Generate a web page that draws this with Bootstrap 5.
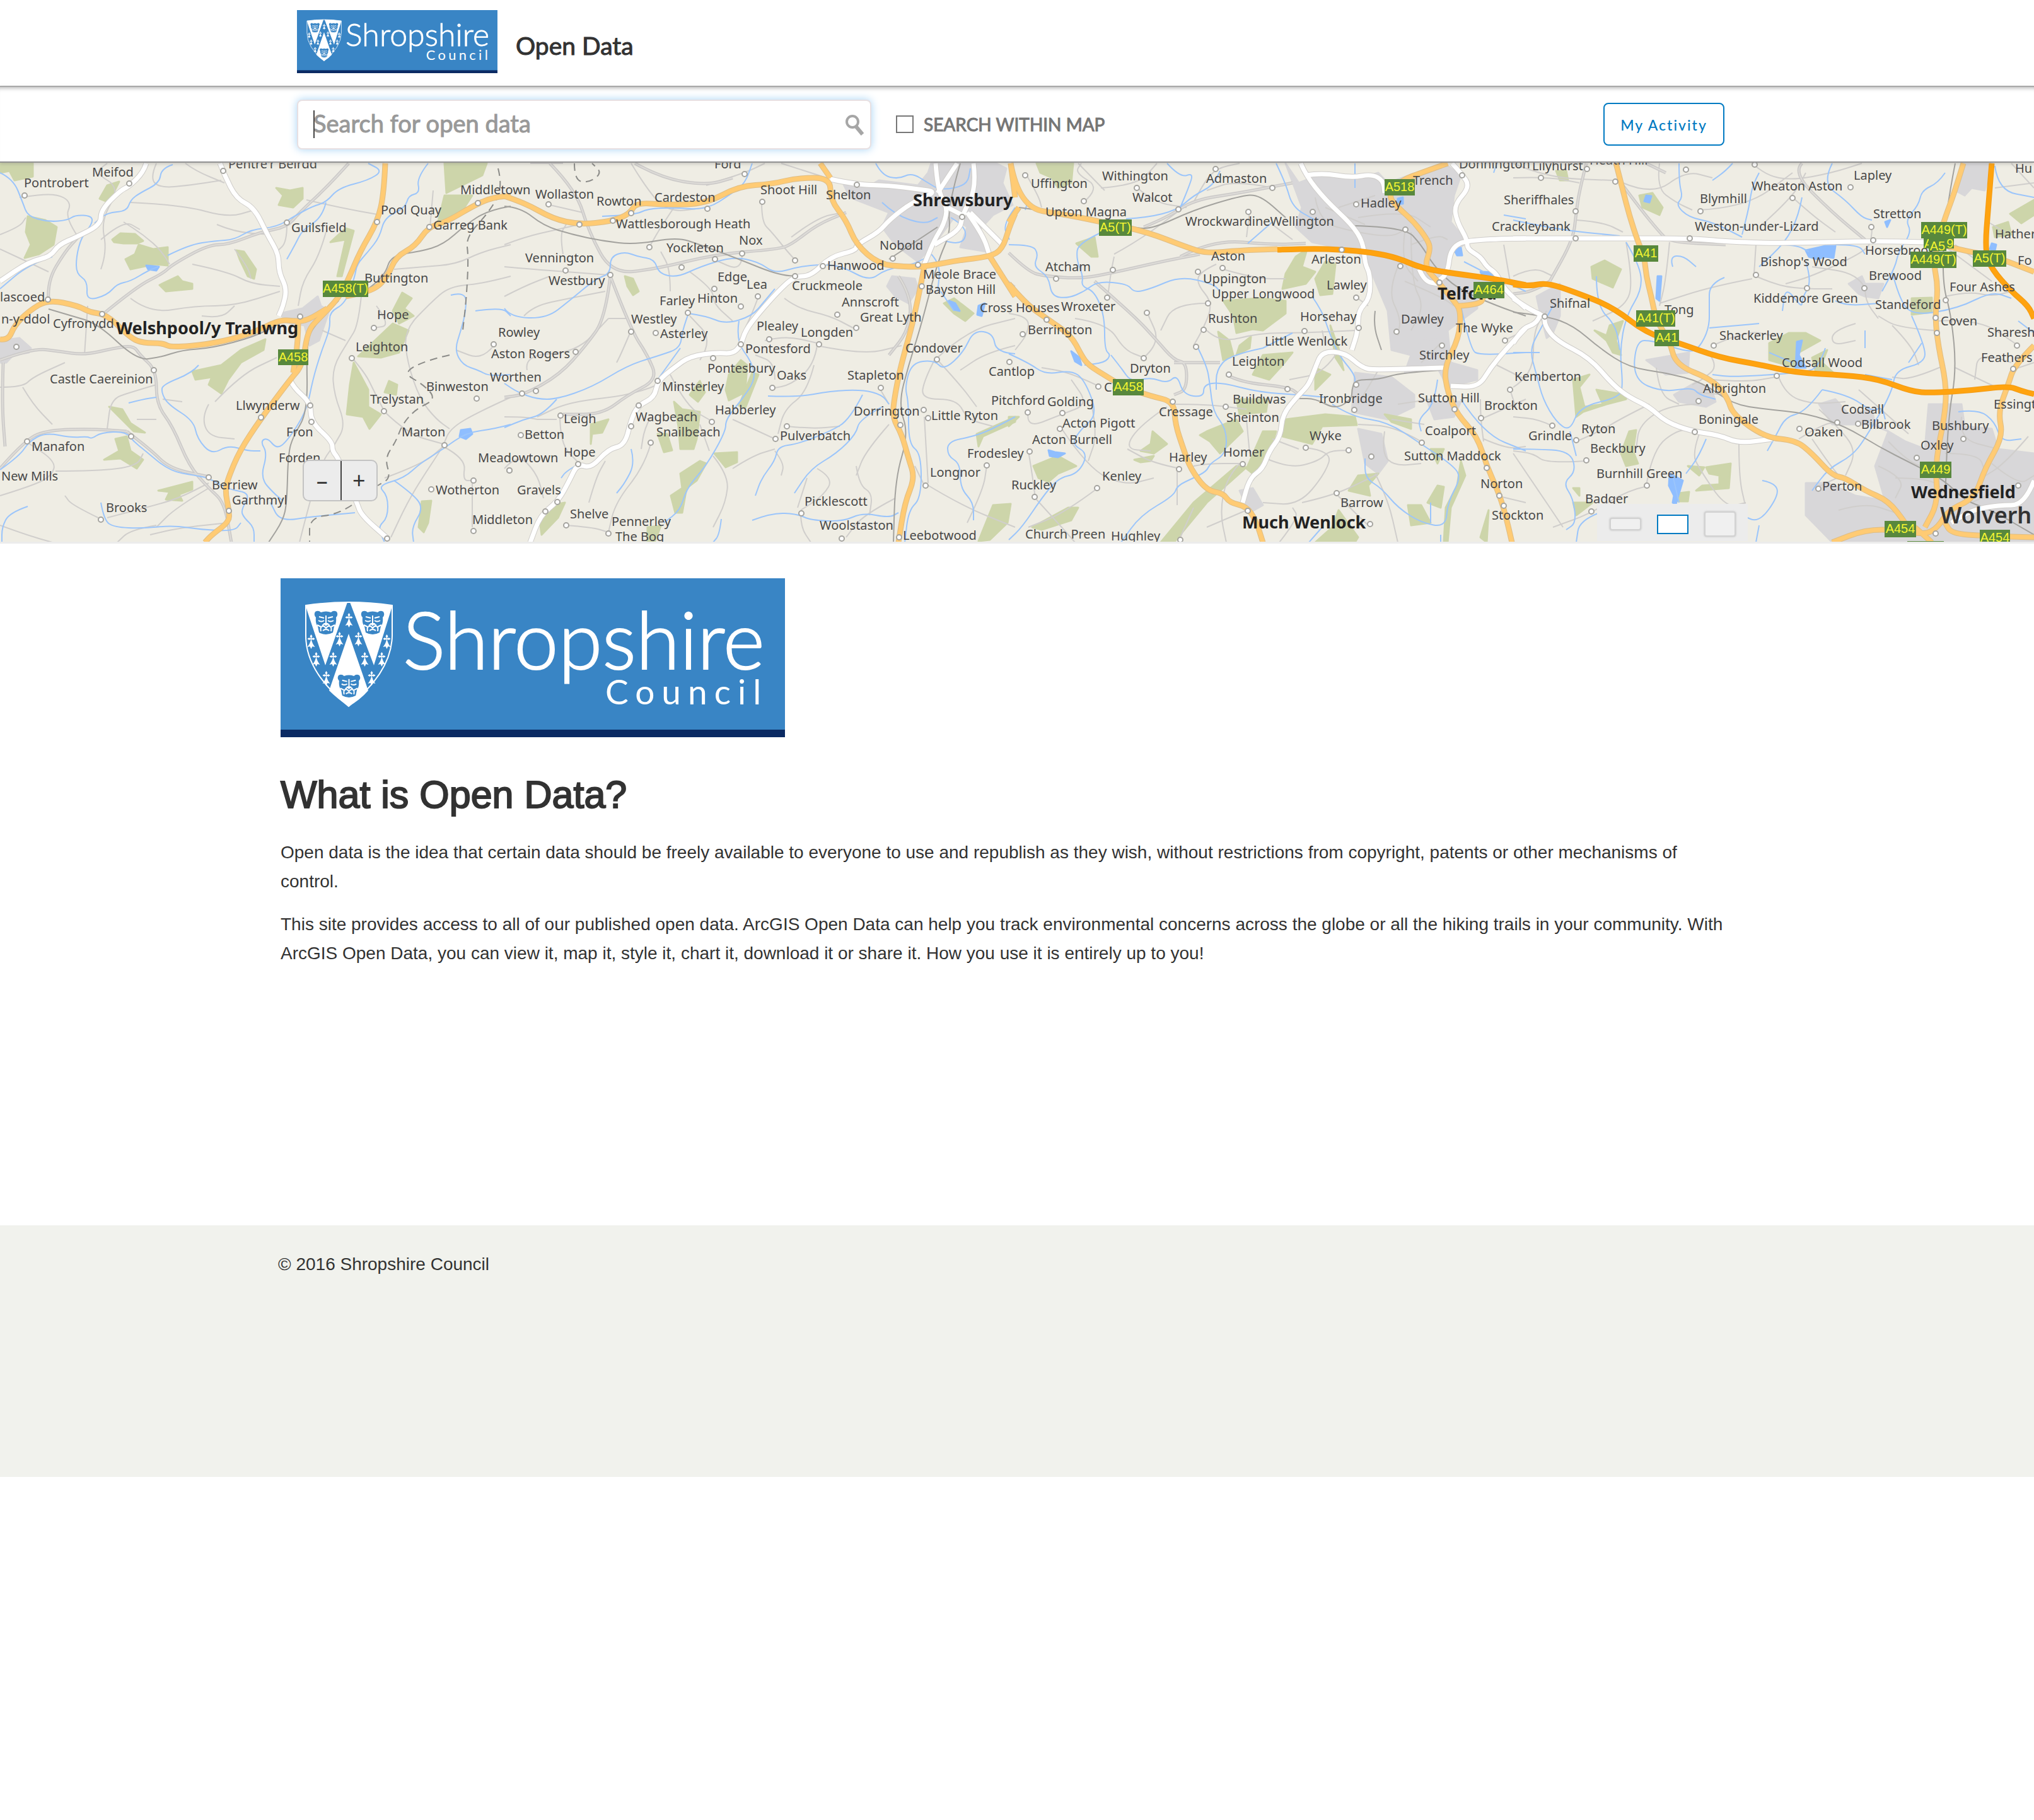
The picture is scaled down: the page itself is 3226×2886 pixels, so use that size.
<!DOCTYPE html>
<html lang="en">
<head>
<meta charset="utf-8">
<meta name="viewport" content="width=device-width, initial-scale=1">
<title>Shropshire Council Open Data</title>
<link rel="stylesheet" href="https://cdn.jsdelivr.net/npm/bootstrap@5.3.0/dist/css/bootstrap.min.css">
<style>
  body { font-family: "Liberation Sans", Arial, sans-serif; font-size: 28px; line-height: 46px; color: #323232; background: #fff; }
  .ui-font { font-family: Lato, "Open Sans", sans-serif; }
  .shell { width: 100%; max-width: 2284px; margin-inline: auto; }
  .copy-shell { width: 100%; max-width: 2336px; margin-inline: auto; }
  .site-head { padding-block: 16px 20px; }
  .site-head .brand-logo { width: 318px; }
  .site-name { font-size: 39px; line-height: 46px; color: #323232; margin-left: 29px; padding-top: 12px; -webkit-text-stroke: 1px #323232; }
  .search-bar { position: relative; z-index: 2; height: 122px; border-top: 2px solid #a9a9a9; border-bottom: 2px solid #929292;
    box-shadow: inset 0 8px 6px -6px #bbb, 0 2px 5px #7775; background: #fff; }
  .search-wrap { width: 911px; }
  .search-wrap .form-control { height: 79px; border: 2px solid #e8e0e2; border-radius: 8px; padding: 0 70px 4px 24px; font-size: 38px; color: #333;
    box-shadow: 0 0 14px #a6d3f5; }
  .search-wrap .form-control::placeholder { color: #999; opacity: 1; -webkit-text-stroke: 1px #999; }
  .caret-line { left: 26px; top: 17px; width: 2px; height: 44px; background: #444; }
  .search-icon { right: 10px; top: 23px; width: 32px; height: 34px; }
  .within { margin-left: 39px; gap: 16px; font-size: 28px; color: #757575; -webkit-text-stroke: 1px #757575; }
  .within .form-check-input { width: 28px; height: 28px; border: 2px solid #777; border-radius: 0; margin: 0; }
  .btn-activity { width: 192px; height: 68px; margin-right: 20px; border: 2px solid #007ac2; border-radius: 8px; color: #007ac2; background: #fff;
    font-size: 23px; font-weight: 500; letter-spacing: 2px; padding: 3px 0 0; }
  .map-area { height: 604px; overflow: hidden; background: #efede4; border-bottom: 3px solid #ececec; }
  .map-area svg.map-art { display: block; width: 100%; height: 601px; }
  .map-art text { font-family: "Noto Sans", "DejaVu Sans", sans-serif; font-size: 20px; fill: #484848; }
  .map-art text.town { font-weight: 700; font-size: 27px; fill: #222; }
  .map-art text.city { font-weight: 600; font-size: 36px; fill: #333; }
  .map-art text.shield-no { font-family: "Liberation Sans", Arial, sans-serif; fill: #f3f531; }
  .zoom-set { left: 480px; top: 471px; width: 119px; height: 66px; background: #ececec; border: 2px solid #c3c3c3; border-radius: 10px; }
  .zoom-set .btn { width: 50%; border: 0; border-radius: 0; padding: 0; color: #333; font: 36px/50px "Noto Sans", sans-serif; }
  .zoom-set .btn + .btn { border-left: 2px solid #444; }
  .size-set { right: 454px; bottom: 1px; width: 239px; height: 59px; background: #ececec; gap: 25px; padding-top: 5px; }
  .size-set .btn { width: 50px; padding: 0; border: 2px solid #d2d2d2; border-radius: 4px; background: #f0f0f0; box-shadow: 0 0 3px #bbb; }
  .size-set .h-low { height: 20px; } .size-set .h-mid { height: 31px; } .size-set .h-tall { height: 40px; }
  .size-set .h-mid { border: 2px solid #007ac2; border-radius: 0; background: #fff; box-shadow: none; }
  .copy { padding-top: 55px; min-height: 1081px; }
  .copy .brand-logo { width: 800px; }
  .copy h1 { font-size: 61px; line-height: 66px; font-weight: 400; -webkit-text-stroke: 2px #323232; margin: 58px 0 36px; }
  .copy p { max-width: 2304px; margin-bottom: 22px; }
  .site-foot { background: #f1f2ed; min-height: 399px; padding-top: 39px; }
  .foot-shell { width: 100%; max-width: 2344px; margin-inline: auto; }
  .brand-logo svg { display: block; width: 100%; height: auto; }
  .brand-logo text { font-family: Lato, sans-serif; fill: #fff; }
  .brand-logo .wordmark { stroke: #fff; stroke-width: 2px; }
</style>
</head>
<body>
<svg width="0" height="0" class="position-absolute" aria-hidden="true">
  <defs>
    <symbol id="leopard" viewBox="0 0 40 40">
      <path d="M3 3Q8 0 12 4Q20 1 28 4Q32 0 37 3Q40 8 36 12Q37 22 33 26L31 36Q20 42 9 36L7 26Q3 22 4 12Q0 8 3 3Z" fill="#3985c5"/>
      <path d="M9 11L17 13M31 11L23 13M8 17Q13 20 17 17M32 17Q27 20 23 17M20 9V22M14 25Q20 19 26 25M12 34Q10 25 17 26L20 29L23 26Q30 25 28 34M15 33Q20 29 25 33M6 24L12 27M34 24L28 27" fill="none" stroke="#fff" stroke-width="2"/>
      <path d="M16 21H24L20 26Z" fill="#fff"/>
    </symbol>
    <symbol id="ermine" viewBox="0 0 14 24">
      <path d="M7 7Q8 15 13 21L9 20L7 24L5 20L1 21Q6 15 7 7Z" fill="#fff"/>
      <path d="M7 1L9 4L7 7L5 4ZM1 8L4 6L6 8L4 10ZM13 8L10 6L8 8L10 10Z" fill="#fff"/><path d="M2 8H12M7 3V10" stroke="#fff" stroke-width="1.5"/>
    </symbol>
    <symbol id="council-arms" viewBox="0 0 160 180">
      <path d="M12 14Q80 4 149 14V62Q148 120 80 174Q12 120 12 62Z" fill="none" stroke="#fff" stroke-width="2"/>
      <path d="M12 14Q45 9 78 9L43 109L14 22ZM82 9Q115 9 149 14L147 22L120 109ZM80 59L111 149Q98 164 80 174Q62 162 49 149Z" fill="#fff"/>
      <use href="#leopard" x="24" y="21" width="40" height="40"/><use href="#leopard" x="98" y="21" width="40" height="40"/><use href="#leopard" x="61" y="122" width="39" height="39"/>
      <use href="#ermine" x="73" y="25" width="15" height="24"/>
      <use href="#ermine" x="58" y="55" width="15" height="24"/><use href="#ermine" x="88" y="55" width="15" height="24"/>
      <use href="#ermine" x="13" y="59" width="15" height="24"/><use href="#ermine" x="133" y="59" width="15" height="24"/>
      <use href="#ermine" x="21" y="87" width="15" height="24"/><use href="#ermine" x="48" y="87" width="15" height="24"/>
      <use href="#ermine" x="98" y="87" width="15" height="24"/><use href="#ermine" x="125" y="87" width="15" height="24"/>
      <use href="#ermine" x="37" y="117" width="15" height="24"/><use href="#ermine" x="109" y="117" width="15" height="24"/>
    </symbol>
  </defs>
</svg>

<header>
  <div class="site-head">
    <div class="shell d-flex align-items-center">
      <a href="#" class="brand-logo" aria-label="Shropshire Council">
        <svg viewBox="0 0 800 252" role="img">
          <rect width="800" height="252" fill="#3985c5"/><rect y="240" width="800" height="12" fill="#0b2a63"/>
          <use href="#council-arms" x="28" y="29" width="160" height="180"/>
          <text class="wordmark" x="194" y="144" font-size="126" font-weight="300">Shropshire</text>
          <text x="515" y="200" font-size="55" letter-spacing="11">Council</text>
        </svg>
      </a>
      <div class="site-name ui-font">Open Data</div>
    </div>
  </div>
  <div class="search-bar ui-font">
    <form class="shell h-100 d-flex align-items-center" onsubmit="return false">
      <div class="search-wrap position-relative">
        <input id="q" type="text" class="form-control" placeholder="Search for open data" aria-label="Search for open data">
        <span class="caret-line position-absolute"></span>
        <svg class="search-icon position-absolute" viewBox="0 0 32 34" fill="none" stroke="#a6a6a6"><circle cx="12" cy="12" r="9" stroke-width="4"/><path d="M18 20L28 32" stroke-width="6"/></svg>
      </div>
      <div class="within d-flex align-items-center">
        <input class="form-check-input" type="checkbox" id="within">
        <label for="within">SEARCH WITHIN MAP</label>
      </div>
      <button type="button" class="btn btn-activity ms-auto">My Activity</button>
    </form>
  </div>
</header>

<section class="map-area position-relative" aria-label="Map of Shropshire">
  <svg class="map-art" id="map" viewBox="0 0 3226 601" preserveAspectRatio="xMidYMin slice"></svg>
  <div class="zoom-set position-absolute d-flex" role="group" aria-label="Zoom">
    <button type="button" class="btn">–</button><button type="button" class="btn">+</button>
  </div>
  <div class="size-set position-absolute d-flex align-items-center justify-content-center" role="group" aria-label="Map height">
    <button type="button" class="btn h-low" aria-label="Small map"></button>
    <button type="button" class="btn h-mid" aria-label="Medium map"></button>
    <button type="button" class="btn h-tall" aria-label="Tall map"></button>
  </div>
</section>

<main class="copy">
  <div class="copy-shell">
    <div class="brand-logo">
      <svg viewBox="0 0 800 252" role="img" aria-label="Shropshire Council">
        <rect width="800" height="252" fill="#3985c5"/><rect y="240" width="800" height="12" fill="#0b2a63"/>
        <use href="#council-arms" x="28" y="29" width="160" height="180"/>
        <text class="wordmark" x="194" y="144" font-size="126" font-weight="300">Shropshire</text>
        <text x="515" y="200" font-size="55" letter-spacing="11">Council</text>
      </svg>
    </div>
    <h1>What is Open Data?</h1>
    <p>Open data is the idea that certain data should be freely available to everyone to use and republish as they wish, without restrictions from copyright, patents or other mechanisms of control.</p>
    <p>This site provides access to all of our published open data. ArcGIS Open Data can help you track environmental concerns across the globe or all the hiking trails in your community. With ArcGIS Open Data, you can view it, map it, style it, chart it, download it or share it. How you use it is entirely up to you!</p>
  </div>
</main>

<footer class="site-foot"><div class="foot-shell">© 2016 Shropshire Council</div></footer>

<script>
/* Map sheets, west to east. Each sheet is a 1568-unit square with its own origin and scale. */
const sheets = [
 { x:0, k:.5166,
  urban:["860 630 930 610 975 560 985 600 1010 620 980 740 950 760 935 680 880 665","0 740 60 730 95 770 90 790 40 800 20 830 0 830"],
  wood:["0 20 100 20 100 75 45 90 30 50 0 60","85 235 140 250 175 280 165 350 120 390 75 405 95 350 80 300","330 110 365 95 345 150 325 175 305 165","345 330 370 305 415 308 440 335 420 345 400 345 380 345 350 340","425 350 470 370 515 360 515 435 475 430 400 450 385 410 415 390","848 120 890 130 930 120 930 165 900 200 855 190 870 150","725 375 750 380 785 450 780 490 760 480 735 410","490 515 545 480 560 500 590 510 590 530 510 540","1015 340 1060 285 1085 295 1050 480 1035 480 1060 330","1365 20 1495 20 1480 70 1370 140","1365 150 1450 150 1420 210 1345 255","1235 545 1265 570 1240 610 1270 640 1225 670 1205 620","1205 670 1255 700 1225 790 1170 810 1100 805","1085 830 1130 940 1130 1010 1170 1040 1135 1100 1115 1050 1065 1040 1075 920","1195 905 1220 920 1215 960 1180 950","590 865 680 840 740 780 815 735 810 780 740 830 700 900 680 955 640 920 650 890 600 900","335 1010 375 1020 400 1075 445 1115 410 1110 370 1055","355 1140 390 1130 400 1190 440 1225 420 1260 370 1220 320 1225 365 1190","485 1350 590 1315 590 1345 550 1365 560 1390 510 1385 520 1355","1295 1395 1325 1390 1315 1480 1300 1520 1285 1500"],
  lake:["450 435 488 440 480 455 455 450","1415 1105 1445 1100 1450 1120 1430 1140 1412 1130"],
  minor:["0 820 100 770 180 785 260 800 350 770 410 760 430 800 480 860 480 1000 530 1090 580 1250 640 1340 690 1400 710 1560","10 830 5 1000 15 1170","0 1260 80 1140 150 1105 280 1100 390 1110","390 1110 460 1180 520 1260 640 1295","150 575 145 500 200 380 240 320","310 640 420 520 500 470 530 430 640 350 700 350 800 300 880 280 920 220 1000 120 1070 20"],
  lane:["0 310 60 280 80 240","240 320 200 240 220 180 170 140 60 160","150 460 100 430 0 370","310 450 330 380 310 250 370 120 290 60 330 20","520 430 500 380 440 310 380 260","310 330 380 250 430 290","400 180 560 190 700 240 780 210","480 20 460 80 490 120 580 110 680 90","570 20 600 50 690 100","880 270 880 340 850 380","665 270 720 300 830 310","720 370 760 440 770 490","590 430 700 460 770 510 860 520","400 570 460 630 600 600 720 600 860 540","1000 300 980 400 930 500 915 600","1110 560 1100 680 1070 740 1020 850 1025 960 1060 1080 1030 1160 990 1230 950 1400 920 1560","1060 740 990 700","1155 600 1200 680 1145 690","1080 810 1120 870 1150 950 1180 1030","1180 1030 1250 1120 1360 1160","1568 970 1470 1030 1380 1100 1360 1170 1300 1290 1250 1400 1200 1540","1210 450 1300 440 1400 430 1480 380 1568 350","1568 480 1480 510 1380 520 1320 590 1240 700 1250 830 1290 980 1340 1060 1380 1100","1515 760 1480 820 1400 780","1330 130 1320 280","0 930 70 930 100 890 200 830","70 930 100 1000 160 1080","480 920 400 950 340 980 330 1100","640 1000 620 1050 640 1130 720 1140","660 990 740 880 850 810","0 1370 100 1330 160 1290 170 1230 80 1150","170 1270 300 1270 420 1250 440 1200","310 1465 220 1410 200 1370","330 1460 450 1420 550 1380 640 1320","480 1490 400 1510 360 1560","640 1340 540 1420 480 1500","0 1490 80 1530 160 1560","1180 1300 1300 1240 1360 1170","1450 1310 1450 1500","1360 1170 1430 1220 1420 1310 1450 1310","700 1480 560 1500 460 1530","270 600 260 800","620 640 680 650 720 600","500 980 560 990","420 1060 480 1060","940 170 1040 200 1170 230"],
  water:["0 60 40 85 70 180 85 235 150 260 210 250 230 230 280 232 285 265 250 320 235 400 235 470 270 500 265 580 330 555 360 510 400 500 455 455 485 440","530 25 495 40 490 100 430 140 400 170 390 215 330 220 290 265","515 395 580 350 660 335 720 330 770 290 850 280 910 230 960 195 1000 180 1040 120 1130 90 1175 50 1130 20","1000 180 990 240 930 290 905 350 880 410","1315 20 1280 80 1290 140 1255 150 1245 200 1180 240 1165 320 1130 380 1095 430 1090 480 1060 590 1010 625 1015 690 985 790 960 900 940 1030 880 1150 850 1180 820 1135 800 1150 820 1200 800 1300 840 1360 870 1390","610 840 590 870 500 920 495 950 515 1000 595 1065 605 1140 650 1205 700 1165 760 1190 800 1190","395 995 440 980 480 970","0 1265 60 1210 90 1150 140 1115 220 1135 270 1130 280 1140 310 1115 385 1110 410 1150 440 1180 520 1270 600 1290 640 1300 700 1345 770 1360 740 1430 750 1460 780 1500 780 1560","310 1400 320 1470 350 1500 440 1505 530 1490 620 1510 720 1515 740 1480","1568 1080 1520 1100 1430 1115 1360 1180 1290 1240 1240 1300 1160 1330 1190 1370 1190 1460 1160 1500 1180 1560","1090 1440 960 1455 860 1475 830 1400","1385 555 1430 540 1430 620 1415 700 1395 780 1420 840 1470 860 1500 885 1568 880","1460 620 1540 605 1568 640","85 1415 30 1440 5 1500 5 1560","1210 1310 1265 1360 1300 1420 1265 1500 1270 1560","160 400 90 430 0 530"],
  rail:["150 612 220 640 300 670 420 820 490 810 560 780 650 770 780 725 860 670","1040 580 960 680 940 760 945 1030 900 1130 885 1200 880 1400 870 1470 825 1560","1568 195 1500 210 1430 270 1360 350 1290 380 1200 395 1180 480 1100 560"],
  edge:["1530 40 1545 120 1500 220 1430 320 1438 400 1432 560 1420 700","1380 800 1310 820 1235 870 1300 920 1340 980 1275 1020 1235 1080 1215 1150 1180 1220 1200 1300 1160 1330","1080 1410 1040 1445 950 1460 950 1560"],
  white:["450 20 440 60 395 115 370 130 310 210 310 270 235 320 180 350 155 400 90 420 0 500","675 20 690 70 725 165 780 200 820 310 855 390 855 460 880 530 870 600 855 640","890 900 900 930 955 995 955 1070 1020 1150 1020 1190 1040 1220 1095 1400 1110 1450 1190 1545"],
  main:["1182 20 1178 140 1160 255 1105 380 1070 490 1040 570 980 650 945 700 930 840 890 900 800 1060 735 1190 700 1300 692 1350 702 1430 705 1475 650 1530 630 1560","1568 155 1530 155 1468 182 1370 260 1315 280 1275 355 1215 400 1190 480 1150 535 1060 560","0 735 25 740 45 680 90 620 148 575 240 600 275 625 330 635 400 730 440 750 500 750 525 768 640 755 740 725 800 695 860 655 900 662 940 660 1005 610","915 662 915 740 900 870"],
  dots:"75 150 396 103 686 52 880 262 1158 258 1318 278 1468 182 148 575 314 634 922 642 50 765 473 860 802 1052 953 1005 957 1072 1147 688 1081 811 1515 756 1464 975 1178 1027 1364 1165 83 1150 403 1130 640 1297 310 1467 702 1432 1453 1310 1325 1345 1564 1268 1453 1514 1189 1544",
  names:[["Meifod",283,75],["Pontrobert",74,117],["Pentre'r Beirdd",700,40],["Guilsfield",895,300],["Pool Quay",1170,229],["Middletown",1413,147],["Garreg Bank",1330,289],["Buttington",1118,506],["lascoed",0,582],["n-y-ddol",4,670],["Cyfronydd",163,690],["Hope",1158,653],["Leighton",1092,783],["Castle Caereinion",152,914],["Llwynderw",724,1023],["Trelystan",1137,996],["Binweston",1308,946],["Fron",879,1130],["Marton",1233,1130],["Forden",856,1236],["Manafon",97,1190],["New Mills",4,1308],["Berriew",651,1345],["Garthmyl",713,1407],["Brooks",325,1437],["Wotherton",1337,1365],["Middleton",1450,1485],["Meadowtown",1468,1234],["Rowley",1530,725],["Aston Rogers",1508,812],["Worthen",1505,908]],
  towns:[["Welshpool/y Trallwng",357,714]],
  roads:[["A458(T)",992,496,140,67],["A458",853,776,92,64]] },
 { x:800, k:.5166,
  urban:["1040 100 1110 120 1150 90 1270 110 1300 60 1310 20 1510 20 1540 40 1530 100 1560 190 1500 230 1460 290 1480 380 1400 360 1420 280 1380 240 1330 330 1270 420 1200 350 1160 280 1180 220 1060 160","1190 480 1260 490 1270 530 1240 590 1200 560 1175 520"],
  wood:["370 480 395 490 412 540 395 555 378 520","725 820 745 840 740 950 690 985 680 940 690 880","760 870 780 880 740 1015 720 1005","520 990 545 1020 600 1030 590 1140 580 1180 540 1180 535 1090","600 905 615 950 595 990 570 960","265 1080 320 1060 300 1115 270 1120 265 1160","470 1120 500 1120 515 1185 490 1195","645 1200 715 1195 715 1235 680 1255","540 1280 600 1230 620 1240 590 1310 560 1340 545 1440 525 1440 512 1370 545 1340","1350 590 1380 570 1440 630 1415 660 1380 630","1450 1120 1568 1050 1568 1070 1470 1130 1455 1170","1500 1410 1555 1405 1545 1480 1490 1550 1455 1555","145 1410 185 1400 165 1460 115 1530 110 1490","440 1500 480 1495 460 1560 440 1560"],
  lake:["1365 580 1385 590 1398 620 1380 615","1455 600 1475 590 1465 640 1452 635"],
  minor:["140 20 220 130 260 300 330 470 460 450 650 390 840 370 880 350 960 270 1050 220","325 480 310 650 250 760 170 880 60 960 0 970","325 480 390 700 440 800 470 900 380 960 300 1040 180 1040","1210 480 1250 560 1240 700 1180 800","400 20 480 80 620 110 700 80"],
  lane:["390 20 430 110 500 220 620 200","790 180 790 260 820 300 870 380 890 410","180 20 80 20","0 350 60 320 160 290 230 270","180 390 170 310 190 270","60 640 90 600 200 570 310 540","0 440 90 450 190 460 320 475","70 860 60 800 220 790 320 650","320 650 380 650","390 700 360 790 345 830","510 540 510 450 480 380","570 460 640 530 640 590 700 660","600 820 640 740 570 640","800 740 860 720 960 750","780 560 760 630 740 690","860 570 900 610 1000 640 1070 690","960 760 950 840 880 920 820 935","960 760 1100 800 1220 760","950 840 930 950 860 1020 840 1120","1150 930 1180 1000","830 900 830 830 770 800","510 880 560 1010 640 1070","450 1050 430 1100 420 1180","450 1160 430 1250 340 1400 320 1520","170 1040 170 1160 230 1240","0 1260 40 1200 100 1280 120 1380","100 1060 160 1060","260 1400 280 1300 310 1230","190 1490 270 1500 320 1520","640 1210 690 1290 680 1400 640 1500","700 1260 760 1210 830 1180","830 1190 860 1240 850 1290","870 1090 940 1100 1030 1090","910 1440 910 1500 940 1560","930 1300 900 1420","960 1260 1010 1300 980 1370 910 1430","1080 1250 1090 1330 1130 1360 1120 1450","1180 1080 1110 1190 1080 1290","1290 1320 1400 1410 1568 1500","1290 1330 1260 1250","1420 1480 1470 1350 1480 1250","1290 1050 1300 1320","1320 820 1290 900 1280 980 1390 980 1420 1060 1500 1090","1330 810 1420 700 1568 650","1510 460 1568 520","1330 820 1400 920 1450 1010","1200 1380 1100 1450 1050 1540","0 1050 60 1050 100 1060","470 920 400 960 200 990 100 1050","600 1080 630 1190","880 320 960 240 1040 220","620 110 740 60 800 20","850 20 990 80","1568 760 1480 790 1400 860","700 1060 830 1140","140 190 240 220","520 200 480 280 450 350","730 390 730 460 640 410","0 560 60 520 140 480"],
  water:["0 610 20 645 130 650 200 580 280 490 325 470 325 400 370 380 410 400 460 410 475 470 530 485 600 440 700 400 780 420 830 470 900 440 980 430 1040 440 1120 500 1170 450 1260 430 1310 390","300 235 400 230 440 205 520 200 620 210 700 140 740 100 760 20","565 630 620 640 680 675 760 640 800 580 830 530","720 660 710 740 760 830 770 900 730 980 680 1060 680 1110 620 1250 560 1340 540 1430 490 1480","565 630 545 700 540 770 480 800 380 840 270 930 160 980 100 980 40 950 0 915","540 770 470 900","160 980 120 1040 60 1060 0 1095","810 965 900 970 1000 945 1100 940 1160 960 1180 1000","1100 960 1060 1060 1000 1110 900 1160 840 1170 830 1230 790 1300 770 1370","1160 1010 1090 1060 1080 1120 1020 1200 940 1260 890 1360","1140 20 1160 70 1210 85 1250 60 1300 100 1340 130 1420 110 1430 40","1160 180 1200 230 1290 270 1330 240","1370 240 1420 280 1410 350 1330 330","1340 540 1380 620","1310 390 1340 430 1330 540","1568 795 1510 790 1500 710 1440 700 1410 790 1350 860 1320 820 1250 830 1230 930 1240 990 1240 1160 1280 1200 1280 1380 1240 1430 1230 1560","1568 1050 1500 1100 1440 1130 1360 1150 1360 1210 1400 1240 1400 1340 1440 1400 1440 1470","760 1470 820 1440 900 1445 940 1470 1040 1475 1100 1440 1180 1460 1210 1440","390 1180 400 1240 370 1320 345 1360","230 1240 190 1270 175 1300","665 1465 660 1530 640 1560","1568 200 1530 270 1550 330"],
  rail:["0 195 50 200 120 275 210 310 300 335 400 350 530 320 600 350 700 400 860 485 940 470","1400 20 1360 200 1370 300 1330 420 1280 680 1240 840 1210 1000 1240 1120 1200 1300 1195 1560","1330 280 1180 410"],
  edge:["215 20 215 90 260 100 300 60 270 20"],
  white:["1000 85 1080 108 1180 110 1270 125 1330 135 1250 180 1180 250 1150 300 1080 350 1080 375 1000 400 940 480 890 478 840 540 780 630 740 700 725 760 700 795 650 790 570 805 520 850 470 905 460 970 410 1005 390 1060 370 1165 320 1180 265 1260 225 1240 200 1310 165 1395 110 1450 80 1560","1325 20 1330 130 1360 200 1350 270 1320 330 1290 430","1390 20 1330 140","1440 20 1450 120 1405 230 1400 290 1320 350","1420 220 1470 310 1490 400","1430 220 1490 300 1525 345","1360 200 1405 230"],
  main:["0 155 60 180 150 245 230 268 330 255 385 225 405 180 500 190 620 185 720 112 820 105 900 80 1000 80 1000 170 1050 250 1080 350 1150 430 1230 440 1290 440 1390 415 1490 400 1530 370 1550 280 1568 225","970 20 1000 80","1490 400 1568 560","1290 440 1260 640 1220 830 1200 950 1190 1050 1220 1120 1240 1220 1260 1300 1230 1400 1210 1560","1555 20 1568 160"],
  dots:"136 188 230 268 333 254 389 222 624 206 737 63 791 176 1083 108 446 361 187 457 326 473 543 442 646 410 729 386 892 416 892 478 978 437 1193 407 1270 432 1406 237 1282 519 644 530 779 560 725 601 563 627 389 704 465 710 218 786 1023 635 1080 688 813 735 965 757 725 756 640 811 1328 817 1550 827 471 904 97 945 55 956 822 933 1155 933 412 1005 172 1045 1287 1022 1300 1056 1216 1084 868 1088 389 1088 637 1072 833 1139 449 1155 51 1124 226 1242 16 1268 1480 1249 1293 1329 163 1396 125 1436 190 1492 319 1525 911 1443 1035 1545 1212 1541",
  names:[["Wollaston",95,163],["Rowton",283,192],["Cardeston",461,177],["Ford",645,40],["Shoot Hill",786,147],["Shelton",988,166],["Wattlesborough Heath",342,285],["Nox",721,352],["Yockleton",497,381],["Nobold",1151,371],["Vennington",64,424],["Westbury",135,515],["Hanwood",991,454],["Edge",654,500],["Lea",743,531],["Cruckmeole",883,536],["Meole Brace",1286,489],["Bayston Hill",1293,551],["Farley",476,597],["Hinton",592,587],["Annscroft",1036,601],["Great Lyth",1092,664],["Cross Houses",1460,624],["Westley",389,670],["Asterley",478,731],["Plealey",775,699],["Longden",910,726],["Condover",1231,788],["Pontesford",740,791],["Pontesbury",623,870],["Oaks",836,900],["Stapleton",1054,900],["Minsterley",484,946],["Cantlop",1487,884],["Leigh",182,1077],["Wagbeach",403,1069],["Habberley",646,1039],["Dorrington",1072,1046],["Little Ryton",1311,1063],["Pitchford",1494,1001],["Betton",62,1140],["Snailbeach",466,1129],["Pulverbatch",845,1145],["Hope",182,1212],["Frodesley",1421,1216],["Longnor",1306,1295],["Gravels",39,1365],["Picklescott",921,1411],["Shelve",202,1464],["Pennerley",329,1494],["Woolstaston",967,1508],["The Bog",340,1556],["Leebotwood",1223,1550]],
  towns:[["Shrewsbury",1255,196]], roads:[] },
 { x:1600, k:.523,
  urban:["840 20 880 100 940 70 1050 90 1120 60 1150 100 1320 20 1370 70 1350 150 1340 260 1390 340 1330 400 1330 470 1400 490 1480 490 1500 560 1420 540 1420 610 1330 700 1340 830 1420 860 1420 900 1330 930 1300 850 1200 870 1220 800 1160 780 1150 620 1100 460 1060 380 920 340 870 280 890 200","1050 870 1160 890 1230 960 1230 1010 1150 1060 1040 1030","1270 990 1370 990 1350 1050 1290 1060","1060 1100 1130 1120 1150 1230 1120 1280 1080 1240","700 1350 740 1340 770 1410 730 1440","1240 730 1330 740 1290 800 1250 790"],
  wood:["85 20 195 20 190 100 150 120 130 80 95 60","205 345 260 320 270 400 250 400","870 400 905 370 890 440 930 460 900 510 830 530 840 470","960 420 990 430 980 550 945 555 930 490","650 580 760 570 840 580 840 630 770 700 740 695 690 710 680 640","635 705 670 740 680 800 650 820","735 725 730 770 690 800 700 760","770 800 860 790 830 840 790 900 740 880","975 680 1000 770 1015 860 990 810","930 850 975 880 930 940","600 1110 690 1060 710 1110 640 1200 610 1150 580 1125","690 980 785 980 780 1030 700 1040","840 1060 960 1040 1050 1050 1055 1085 950 1090 920 1160 830 1130","770 1110 810 1110 790 1200 740 1280 720 1260","435 1110 480 1160 440 1200 400 1190 430 1160","380 1225 440 1210 430 1230 400 1235","75 1250 150 1210 205 1250 150 1280 120 1315 90 1300","690 1250 720 1255 600 1400 500 1560 460 1560 560 1400","70 1500 180 1420 210 1420 190 1470 100 1510","1000 1430 1060 1540 1050 1560 930 1560 980 1500","1060 1290 1120 1280 1090 1330 1095 1370 1030 1350","1140 1040 1220 1060 1220 1100 1160 1070","1210 1410 1250 1410 1280 1480 1220 1490","1300 1330 1320 1335 1310 1420 1270 1400","1370 1230 1385 1290 1340 1420 1330 1560 1320 1560 1325 1420 1360 1330","1280 1180 1320 1180 1300 1240","1455 1430 1450 1560 1430 1540","0 1050 30 1050 0 1090"],
  lake:["190 785 215 810 220 840 200 825","120 1185 140 1195 170 1200 150 1215 125 1210","1350 370 1370 365 1375 395 1360 395","1430 460 1480 465 1470 480 1435 475","1180 165 1195 160 1195 185 1180 185"],
  minor:["0 385 60 460 110 480 220 490 320 465 460 420 580 390","410 280 480 240 560 170 700 140 860 100","520 400 620 330 800 350 900 345","260 500 380 640 450 740 500 820 540 830 540 940 500 960","660 880 700 910 850 930 880 960","500 830 640 830"],
  lane:["50 60 90 150 100 200","225 180 280 120 200 60 220 20","280 120 390 110 450 20","390 120 440 180 540 200","320 400 310 460 300 560","320 390 400 330 540 190","560 180 590 100 630 40 700 20","800 120 690 90 600 130","730 215 720 320","800 270 860 330","630 430 580 460 570 510 620 590 590 690 560 760","600 590 500 590 460 700","650 450 750 490 840 490","600 700 640 750 760 710 890 710 1050 700","410 810 460 750 420 630","0 630 60 640 60 710 20 780","200 650 300 670 350 780 410 810","280 930 190 870 100 850","60 1030 50 1100 160 1040 240 1000 190 900","60 1190 70 1280 80 1380","160 1100 240 1260 350 1330 440 1300","250 1000 270 1120 240 1230","500 1000 600 1000 720 1020","480 1010 400 1080 350 1180 430 1190","520 1260 440 1240 360 1180","560 1250 600 1240 700 1240","510 1410 510 1260","700 1240 660 1300 640 1440 660 1560","780 1220 850 1260 940 1230 970 1190 1030 1185","900 1175 980 1190 960 1280 880 1410 770 1400","890 1400 980 1370 1080 1310 1120 1280","990 1360 1050 1440 1090 1490","1110 1280 1150 1380 1180 1560","1140 1110 1130 1200 1170 1250 1250 1240","720 1060 730 1200","1000 780 960 870 850 900","950 700 960 760","1050 560 1090 600","1180 440 1150 540 1190 650 1180 720","1200 300 1190 420 1240 500","930 160 940 260 1050 300 1160 320 1200 290","1000 200 1110 150","960 200 1080 270","1060 240 1200 210 1280 280","1220 300 1220 500 1260 600 1220 700","1220 350 1300 310 1330 330","1310 750 1250 830","1200 500 1310 560 1350 600","1430 980 1430 1050 1440 1150","1430 1060 1568 980","1440 1140 1510 1180 1568 1170","1568 1400 1480 1370","1520 940 1540 1020","1500 740 1568 700","1500 350 1520 500","1568 900 1480 840","1250 1150 1170 1090 1060 1080","80 1380 160 1500 200 1560","270 1340 170 1440 60 1500","560 1420 520 1540","720 1430 600 1500","820 1560 880 1460 860 1420","1280 980 1180 1000","1160 1060 1260 1080","1120 860 1060 1000","880 1180 800 1140","210 20 290 130"],
  water:["0 350 70 350 90 390 75 440 120 480 130 560 180 570 230 540 270 500 360 510 380 545 430 530 520 480 620 510 640 540","355 245 420 240 510 210 560 150 620 110 640 50","480 20 520 80 560 60 545 120 520 200","300 290 210 340 205 410 225 480 220 520 260 540 290 640 290 780 310 800 290 830 230 840","0 795 60 830 110 880 190 860 230 900 270 1040 220 1100 190 1160 240 1200 210 1280 150 1300 100 1380 40 1500 0 1550","310 800 340 850 370 910 430 890 480 915 510 880 530 960 590 970 590 920 640 910 760 950 880 960 960 970","810 20 840 100 860 200 930 250","570 760 600 840 610 920 620 1030 660 1100 660 1200 610 1240 600 1270 560 1300 510 1330 500 1370 400 1450 340 1560","770 770 670 800 630 860 630 940","860 710 770 770","920 560 950 620 970 700 1000 800 1050 880 1050 920","980 1000 1040 1050 1150 1070 1250 1160 1350 1250 1370 1300 1330 1400 1325 1500 1250 1480 1180 1420 1130 1340 1080 1300 1080 1220","1370 600 1400 780 1430 800 1568 790","1370 980 1440 1120 1568 1190","1300 900 1290 1000 1240 1060 1250 1110","1568 540 1500 500","1380 420 1440 460","725 345 800 260","1480 20 1470 60","1500 230 1568 245","910 1560 950 1500","1280 1400 1280 1480","1310 1530 1310 1560","60 170 50 210","1050 20 1050 120"],
  rail:["30 200 120 215 380 285 440 285 560 210 700 155 760 145 840 240","1050 275 1200 280 1250 350 1290 440 1360 530 1480 600 1568 640","1310 860 1190 870 1120 900 1050 900 1040 940 1040 980 990 1020 930 975 880 975","1110 620 1105 680 1130 780"],
  edge:[],
  white:["885 20 900 70 960 170 1040 270 1075 340 1080 430 1095 470 1095 570 1060 620 1060 700 1040 780","900 70 950 60 1040 80 1100 65 1135 90 1140 140","1345 20 1370 60 1400 115 1350 190 1360 260 1390 330 1390 370 1430 400 1450 440 1480 470 1500 530 1568 610","1568 325 1400 328 1340 360 1330 470 1300 500","1320 850 1110 860 1070 850 1020 790 950 785 930 850 910 920 880 960 830 1040 825 1130 790 1190 770 1260 730 1300 710 1400","1568 690 1510 770 1460 850 1425 930 1340 925","1245 450 1260 500 1300 510"],
  main:["5 20 30 200 180 230 300 265 420 300 540 360 600 388 700 375 815 370","30 200 0 260","0 510 50 590 115 650 190 720 220 800 240 840 300 890 350 930 430 965 500 990 505 1080 530 1180 550 1260 600 1350 650 1360 670 1400 720 1415 750 1470 770 1560","1330 20 1250 60 1190 90 1150 150 1180 200 1230 260 1270 330 1280 370 1260 440 1300 500 1350 580 1370 620 1365 730 1320 850 1330 950 1360 1040 1420 1130 1450 1250 1490 1370 1510 1470 1525 1560","1365 600 1430 595 1440 560"],
  motor:["815 372 920 367 1010 372 1100 382 1180 405 1250 445 1340 467 1470 490 1568 514"],
  dots:"50 68 627 43 388 120 800 120 514 207 227 173 727 217 922 217 1053 186 1202 289 1010 371 1187 437 315 453 143 489 648 447 574 462 299 565 605 590 1053 565 1305 504 418 627 115 657 590 698 42 715 896 702 1061 688 1175 704 567 765 1313 760 1504 740 410 811 667 878 272 928 846 938 1053 919 1520 940 498 990 658 1010 58 1032 162 1036 154 1098 1048 1022 1351 1021 1432 1056 1252 1155 63 1191 900 1175 1030 1185 1099 1211 709 1242 517 1263 1450 1257 268 1341 78 1376 995 1360 1488 1370 1500 1411 724 1432 1095 1487 521 1549 1374 68",
  names:[["Withington",283,90],["Uffington",67,121],["Walcot",374,178],["Admaston",598,101],["Trench",1225,107],["Donnington",1366,41],["Hadley",1067,200],["Upton Magna",110,235],["Sheriffhales",1500,188],["WrockwardineWellington",535,275],["Crackleybank",1465,295],["Aston",614,414],["Arleston",917,428],["Atcham",110,458],["Uppington",589,507],["Lawley",964,532],["Upper Longwood",616,568],["Wroxeter",158,620],["Rushton",605,669],["Horsehay",883,660],["Dawley",1189,670],["The Wyke",1356,706],["Berrington",57,715],["Little Wenlock",777,762],["Leighton",677,844],["Stirchley",1244,818],["Dryton",367,870],["Kemberton",1534,904],["Co",288,947],["Buildwas",678,996],["Ironbridge",940,993],["Sutton Hill",1240,992],["Brockton",1442,1023],["Golding",117,1006],["Cressage",455,1048],["Sheinton",659,1070],["Acton Pigott",163,1095],["Acton Burnell",71,1160],["Wyke",912,1145],["Coalport",1262,1125],["Harley",486,1232],["Homer",651,1212],["Sutton Maddock",1198,1228],["Kenley",283,1309],["Ruckley",8,1346],["Norton",1431,1340],["Barrow",1006,1417],["Stockton",1465,1467],["Church Preen",50,1546],["Hughley",310,1552]],
  towns:[["Telford",1300,574],["Much Wenlock",708,1503]],
  roads:[["A518",1140,84,92,66],["A5(T)",273,248,100,66],["A464",1410,503,94,66],["A458",316,898,94,66]] },
 { x:2400, k:.5268,
  urban:["1350 20 1440 20 1420 130 1380 120 1360 150 1330 130","1010 510 1050 480 1060 510 1115 510 1100 570 1060 560 1040 550","70 560 140 510 140 640 120 710 100 730 80 620","400 820 530 790 525 870 460 880","485 960 550 910 600 950 610 990 580 1010 500 990","920 1000 970 980 1010 1040 1080 1020 1090 1080 1130 1110 1180 1150 1240 1180 1250 1000 1350 1000 1360 1090 1440 1100 1460 1180 1568 1200 1568 1560 960 1560 880 1450 880 1320 950 1320 1030 1370 1120 1390 1090 1250 1130 1110 1080 1080 960 1080"],
  wood:["130 50 160 50 165 90 140 90","380 150 420 140 450 200 440 230 390 200","235 440 275 415 325 450 300 525 240 490","1495 225 1568 170 1568 230 1530 265","1445 280 1490 260 1500 310 1450 320","770 750 830 710 880 710 925 740 860 790 850 850 770 820","900 810 945 780 930 830 965 870 910 860","1200 570 1260 565 1260 625 1200 635","245 700 280 720 290 680 330 660 310 740 325 800 300 790 280 740","180 900 230 880 200 930 215 1010 270 1000 250 940 340 960 340 980 280 1000 210 1030 190 1050","350 1110 370 1105 360 1190 375 1240 340 1250 325 1200","525 1250 575 1255 560 1290","580 1255 655 1240 650 1340 550 1350 570 1330 620 1325 620 1290 590 1280","500 1360 530 1355 525 1395 495 1395","180 1340 200 1340 200 1370","180 1400 240 1400 190 1450"],
  lake:["880 375 940 355 970 355 965 405 940 400 915 410 890 400","400 150 415 155 410 180 395 175","855 745 870 740 860 800 880 850 850 850","470 1280 510 1310 490 1405 480 1400 485 1370 468 1330","1440 345 1455 350 1450 375 1435 370","435 480 447 480 440 580 430 570","1120 260 1135 250 1125 280"],
  minor:["220 20 200 130 190 220 180 330 110 500","330 110 380 200 440 300 470 340 640 350","110 500 60 540 0 550","460 60 400 20","870 20 840 60 960 220 1060 330"],
  lane:["0 80 100 75 200 100","0 20 100 80 300 90","190 250 270 260 330 300","440 20 430 120 490 180 540 210","330 100 420 150 520 50 600 80","560 210 700 200 840 60","720 20 760 70 840 90 960 60 1050 20","750 270 840 160 880 60","840 160 900 230 970 300","1080 280 1080 330 1060 380 900 480 820 510","730 350 725 470","730 480 800 520 890 530 960 530","720 490 600 520 440 590","1060 530 1060 580 1100 650","1060 530 1040 470 900 440","470 340 460 500 440 600","340 340 360 500 340 600 240 660","0 480 60 440 120 480","1030 670 960 700 960 760 1030 740","580 780 620 840 570 900 540 920","600 760 700 700 780 720","800 890 820 960 900 1000 1000 990","0 930 60 880 60 700 100 620","120 1090 80 1060 0 1050","190 1150 260 1110 320 1060 410 1000","220 1230 100 1240 60 1200 0 1190","0 1200 60 1320 150 1500","410 1330 340 1350 240 1440 120 1500","400 1330 420 1180 500 1100 550 1110","560 1000 470 1000 380 1080 370 1180","550 950 640 960","600 900 700 910 790 890","430 850 440 960 500 1000","560 1120 540 1200 560 1260 640 1420 700 1400","680 1160 680 1300 700 1420","860 1140 930 1080 980 1070","900 1140 940 1220 980 1290","910 1340 990 1290","920 1020 1000 1120 1030 1200 1000 1290","1140 680 1200 760 1220 840","1300 560 1370 540 1440 560 1500 540","1330 350 1400 420","1280 660 1400 650 1520 760","1500 860 1568 830","1500 830 1400 780 1390 900","1270 700 1160 690 1100 640","1300 840 1200 900 1140 890","1330 850 1470 940","1040 940 1140 1060 1190 1120","1130 1150 1200 1250 1270 1250","1150 1300 1250 1300 1300 1350","1100 1250 1180 1300 1150 1380","1350 1050 1340 1140 1460 1180","1300 1200 1400 1200 1420 1270","1440 1240 1520 1330 1568 1290","1380 1400 1460 1350","980 1430 1060 1400 1150 1440","1450 120 1568 100","1500 20 1568 120","1420 250 1480 300","1310 370 1440 500","1550 1130 1480 1240 1410 1300"],
  water:["500 20 500 100 510 160 490 190 530 240 600 260 690 320","660 20 640 50 600 90","740 60 720 110 710 200 690 310","870 160 860 230 820 340 740 440","960 20 930 100 1000 170 1050 240 1080 250","1300 60 1280 100 1230 130 1220 190 1180 250 1200 300 1160 380 1150 440 1110 540","1450 30 1460 130 1568 160","0 250 130 290 320 315","480 440 470 400 510 395 550 440","635 485 590 510 590 600 590 690 560 770 530 790 420 740 370 740 360 900 450 950 540 930 560 960 610 980","590 690 680 680 740 670","250 480 250 600 310 680 320 780","340 340 380 430 390 530 340 640 320 780 330 920 320 970 200 1010 170 1110 130 1070 90 980 70 880 50 780 80 700 120 600","0 790 80 790","880 420 900 500 870 570 870 610 820 520 810 620","970 580 1000 600 1100 590","1140 460 1160 560 1200 640 1340 610 1440 540 1500 570","1200 640 1240 760 1240 830 1150 860 1140 950 1060 1140 1020 1210 950 1260 900 1350","1230 750 1190 830","770 790 840 830","1060 770 1060 700","930 940 880 1030 820 1050 790 1130 765 1190","930 940 1010 960 1080 1030 1110 1010 1120 1060","0 1180 60 1180 170 1190 190 1270 150 1320 180 1380 190 1480 160 1510","170 1110 190 1210","580 1140 560 1210 520 1280","500 1400 480 1290","750 1310 790 1320 800 1370 740 1480 690 1450 640 1430","740 1490 730 1560","1340 1030 1400 1020 1450 1070 1470 1150 1530 1140","1520 660 1568 710","790 350 850 350 890 380","970 350 1040 350 1060 390","940 770 920 850 870 870 660 890 600 880","1060 880 1140 900","260 1440 200 1470 190 1560"],
  rail:["0 625 100 640 180 680 260 770 350 850 460 870 570 910 660 1000 760 1020 880 1035 1000 1090 1100 1170 1200 1240 1300 1310 1360 1390 1440 1430 1568 1530","1330 20 1300 230 1290 500 1320 640 1335 860 1310 1050 1300 1380"],
  edge:[],
  white:["0 325 350 325 540 325 640 338 800 345 1080 335 1240 342","0 570 50 615 95 640 95 680 130 740 230 810 300 920 350 970 410 1010 460 1070 540 1110 620 1125 680 1158 780 1140","80 640 70 670 30 690 0 750","1568 1310 1540 1410 1460 1410 1380 1430 1320 1480"],
  main:["310 20 330 130 350 230 375 340 395 400 400 480 415 560 430 660 470 740 490 840 600 900 645 970 660 1040 760 1135 850 1145 900 1200 960 1290 1000 1300 1060 1350 1130 1390 1180 1480 1190 1510","1355 20 1330 130 1300 240 1285 310 1265 420 1280 520 1270 640 1280 760 1305 920 1300 1040 1270 1240 1280 1400 1240 1500","1290 350 1350 375 1440 395 1568 460","1568 760 1510 840 1490 920 1460 1030 1475 1130 1420 1260 1390 1380 1310 1430 1280 1500 1240 1530 1160 1510 1060 1510 960 1560","1568 1540 1420 1535 1320 1525 1300 1480","1210 1500 1260 1560"],
  motor:["0 512 50 520 100 505 190 545 300 605 400 710 500 750 620 810 740 838 850 872 1000 882 1100 898 1200 948 1260 952 1380 942 1490 926 1530 945 1568 958","1440 20 1432 180 1420 380 1440 450 1500 540 1550 600 1568 650"],
  dots:"84 79 222 43 308 94 521 47 187 216 563 216 840 161 1015 119 727 26 187 325 532 325 1079 279 1083 334 730 473 885 529 1057 529 1303 576 1272 648 1276 709 1516 760 604 760 95 642 1505 857 794 883 559 986 118 1087 190 1145 547 1113 862 1098 975 1073 1038 1078 1356 1139 220 1226 1215 1216 403 1329 919 1343 235 1436 1520 1329 1272 1524",
  names:[["Lilyhurst",57,48],["Heath Hill",230,26],["Lapley",1025,87],["Hu",1511,60],["Wheaton Aston",717,131],["Blymhill",562,182],["Stretton",1083,244],["Weston-under-Lizard",546,295],["Hather",1451,326],["Horsebrook",1059,391],["Bishop's Wood",744,438],["Fo",1519,433],["Brewood",1071,495],["Four Ashes",1313,541],["Shifnal",110,607],["Kiddemore Green",724,588],["Standeford",1090,613],["Tong",455,634],["Coven",1287,680],["Sharesh",1428,726],["Shackerley",620,737],["Codsall Wood",809,849],["Feathers",1408,828],["Albrighton",571,952],["Codsall",987,1038],["Essingt",1447,1018],["Boningale",558,1079],["Bilbrook",1048,1100],["Bushbury",1260,1105],["Grindle",46,1146],["Ryton",205,1117],["Oaken",877,1130],["Beckbury",231,1197],["Oxley",1226,1183],["Burnhill Green",250,1299],["Perton",930,1350],["Badger",216,1402]],
  towns:[["Wednesfield",1197,1382]], city:[["Wolverh",1285,1484]],
  roads:[["A449(T)",1228,258,138,66],["A449",1236,314,92,52],["A5",1250,325,54,50],["A449(T)",1196,378,138,66],["A5(T)",1383,373,100,66],["A41",362,354,74,66],["A41(T)",370,618,118,66],["A41",425,697,74,66],["A449",1224,1232,94,66],["A454",1118,1473,94,66],["A454",1404,1510,92,66],["",1186,1554,110,30]] }
];
const KY = .3903, DY = -7;
const map = document.getElementById('map');
const add = (tag, attrs, text) => {
  const el = document.createElementNS('http://www.w3.org/2000/svg', tag);
  for (const a in attrs) el.setAttribute(a, attrs[a]);
  if (text) el.textContent = text;
  map.appendChild(el);
};
const pts = (s, str) => {
  const n = str.split(' ').map(Number), out = [];
  for (let i = 0; i < n.length; i += 2) out.push([Math.round(s.x + n[i] * s.k), Math.round(n[i + 1] * KY + DY)]);
  return out;
};
/* Rounds each bend by running quadratic curves through the segment midpoints. */
const curve = p => {
  let d = `M${p[0]}`;
  for (let i = 1; i < p.length - 1; i++) d += `Q${p[i]} ${(p[i][0] + p[i + 1][0]) / 2},${(p[i][1] + p[i + 1][1]) / 2}`;
  return d + `L${p[p.length - 1]}`;
};
const fillLayer = (key, fill) => sheets.forEach(s => s[key].forEach(a => add('path', { d: 'M' + pts(s, a).join('L') + 'Z', fill, stroke: fill, 'stroke-width': 3, 'stroke-linejoin': 'round' })));
const lineLayer = (key, stroke, width, dash) => sheets.forEach(s => (s[key] || []).forEach(a => {
  const o = { d: curve(pts(s, a)), fill: 'none', stroke, 'stroke-width': width, 'stroke-linejoin': 'round' };
  if (dash) o['stroke-dasharray'] = dash;
  add('path', o);
}));
add('rect', { width: 3226, height: 601, fill: '#efede4' });
fillLayer('urban', '#d8d7d9'); fillLayer('wood', '#cdd5aa'); fillLayer('lake', '#8fbeff');
lineLayer('lane', '#d0cecc', 2); lineLayer('minor', '#cbc9c8', 5); lineLayer('minor', '#dedcd8', 2);
lineLayer('water', '#9bc5fb', 2); lineLayer('edge', '#8b8b88', 2, '12 8'); lineLayer('rail', '#a3a29e', 2);
lineLayer('white', '#cfcdca', 9); lineLayer('white', '#fff', 7);
lineLayer('main', '#dfbd84', 9); lineLayer('main', '#ffcb74', 7);
lineLayer('motor', '#f29a14', 9); lineLayer('motor', '#ffa30f', 7);
sheets.forEach(s => pts(s, s.dots).forEach(p => add('circle', { cx: p[0], cy: p[1], r: 4, fill: '#fff', stroke: '#a5a49f', 'stroke-width': 2 })));
const labels = (key, cls) => sheets.forEach(s => (s[key] || []).forEach(l => {
  const p = pts(s, l[1] + ' ' + l[2])[0];
  add('text', { x: p[0], y: p[1], class: cls }, l[0]);
}));
labels('names', 'village'); labels('towns', 'town'); labels('city', 'city');
sheets.forEach(s => s.roads.forEach(r => {
  const p = pts(s, r[1] + ' ' + r[2])[0], w = Math.round(r[3] * s.k), h = Math.round(r[4] * KY);
  add('rect', { x: p[0], y: p[1], width: w, height: h, fill: '#58883d' });
  if (r[0]) add('text', { x: p[0] + w / 2, y: p[1] + 19, 'text-anchor': 'middle', class: 'shield-no' }, r[0]);
}));
</script>
<script src="https://cdn.jsdelivr.net/npm/bootstrap@5.3.0/dist/js/bootstrap.bundle.min.js"></script>
</body>
</html>
